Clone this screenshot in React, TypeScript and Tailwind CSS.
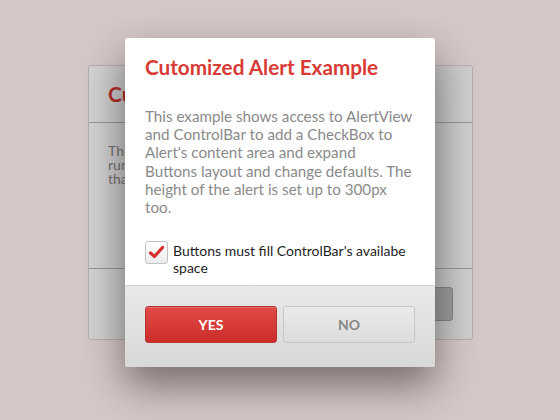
export default function App() {
  return (
    <div
      className="relative w-[560px] h-[420px] overflow-hidden bg-[#d4c8c8]"
      style={{ fontFamily: "Lato, 'Open Sans', sans-serif" }}
    >
      {/* dialog behind, dimmed */}
      <div className="absolute left-[88px] top-[65px] w-[385px] h-[275px] flex flex-col rounded-[3px] border border-[#b5adad] bg-gradient-to-r from-[#d3d3d3] via-[#a8a8a8] to-[#cfcfcf] overflow-hidden">
        <div className="h-[57px] flex items-center px-[19px] border-b border-[#9a9494]">
          <span className="text-[21px] font-bold text-[#b32a26]">Cutomized Alert Example</span>
        </div>
        <div className="flex-1 px-[19px] pt-[21px] text-[14px] leading-[14px] text-[#707070] border-b border-[#9a9494]">
          <p>This example shows access to AlertView and</p>
          <p>runs a longer layout test for the AlertView</p>
          <p>that is shown behind.</p>
        </div>
        <div className="h-[70px] flex items-center justify-end px-[19px]">
          <div className="w-[120px] h-[34px] rounded-[3px] border border-[#858585] bg-[#9c9c9c] flex items-center justify-center text-[14px] font-bold text-[#6a6a6a]">
            CLOSE
          </div>
        </div>
      </div>

      {/* front alert */}
      <div className="absolute left-[125px] top-[38px] w-[310px] h-[329px] flex flex-col rounded-[3px] overflow-hidden bg-white shadow-[0_18px_40px_rgba(40,30,30,0.55)]">
        <div className="flex-1 px-[20px] pt-[16px]">
          <h1 className="text-[20.7px] leading-[26px] font-bold text-[#d83a35]">Cutomized Alert Example</h1>
          <p className="mt-[27px] text-[15.2px] leading-[18.2px] text-[#8a8a8a]">
            This example shows access to AlertView
            <br />
            and ControlBar to add a CheckBox to
            <br />
            Alert's content area and expand
            <br />
            Buttons layout and change defaults. The
            <br />
            height of the alert is set up to 300px
            <br />
            too.
          </p>
          <div className="mt-[25px] flex items-start gap-[5px]">
            <div className="w-[23px] h-[23px] shrink-0 rounded-[3px] border border-[#c2c2c2] bg-gradient-to-b from-white to-[#ececec] flex items-center justify-center">
              <svg width="17" height="17" viewBox="0 0 17 17">
                <path d="M2.5 9 L6.5 12.5 L14.5 3.5" fill="none" stroke="#d9302c" strokeWidth="3.2" strokeLinecap="round" strokeLinejoin="round" />
              </svg>
            </div>
            <p className="pt-[1px] text-[14px] leading-[17px] text-[#1e1e1e]">Buttons must fill ControlBar's availabe space</p>
          </div>
        </div>
        <div className="h-[82px] shrink-0 border-t border-[#d4d4d4] bg-gradient-to-b from-[#e9e9e9] to-[#d8d8d8] px-[20px] pt-[20px] flex gap-[6px]">
          <button className="flex-1 h-[37px] rounded-[3px] border border-[#b83430] bg-gradient-to-b from-[#e14946] to-[#cb2d29] text-white text-[14px] font-bold shadow-[inset_0_1px_0_rgba(255,255,255,0.2)]">
            YES
          </button>
          <button className="flex-1 h-[37px] rounded-[3px] border border-[#c6c6c6] bg-gradient-to-b from-[#eaeaea] to-[#dcdcdc] text-[#888] text-[14px] font-bold">
            NO
          </button>
        </div>
      </div>
    </div>
  );
}
